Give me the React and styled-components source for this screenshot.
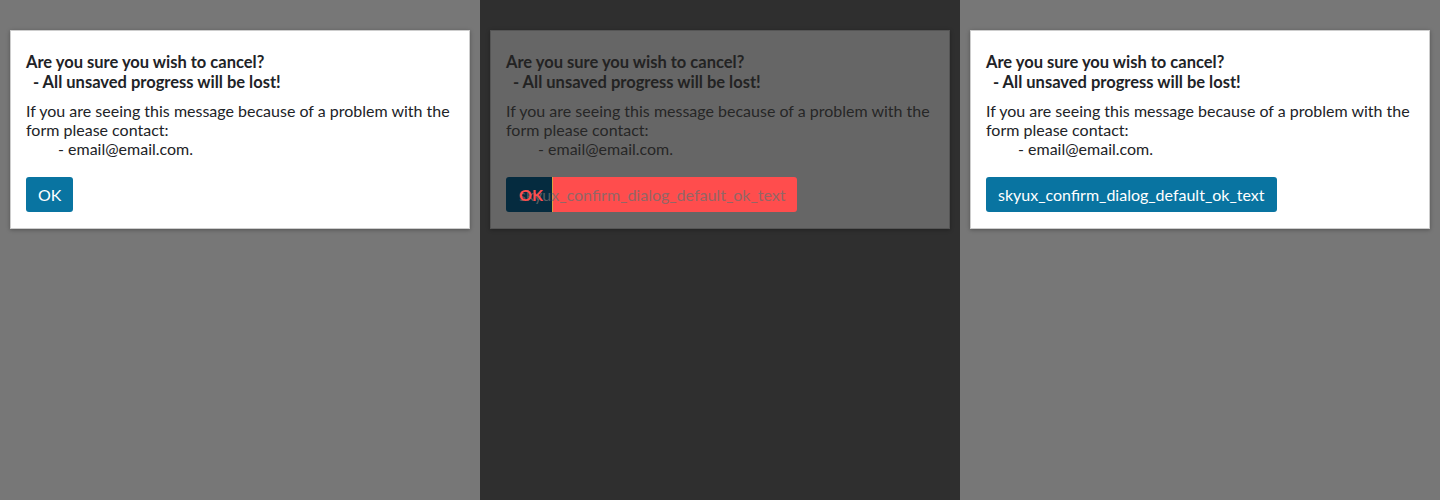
import styled, { createGlobalStyle } from 'styled-components';

const GlobalStyle = createGlobalStyle`
    html, body {
        margin: 0;
        padding: 0;
    }
    body {
        font-family: Lato, "Open Sans", sans-serif;
    }
`;

const HEADING = 'Are you sure you wish to cancel?';
const SUBHEADING = '- All unsaved progress will be lost!';
const LONG_TEXT = 'skyux_confirm_dialog_default_ok_text';

function Dialog({ diff, children }) {
    return (
        <Card $diff={diff}>
            <Heading $diff={diff}>
                {HEADING}
                <br />
                <span className="indent">{SUBHEADING}</span>
            </Heading>
            <Body $diff={diff}>
                If you are seeing this message because of a problem with the form please contact:
                <br />
                <span className="email">- email@email.com.</span>
            </Body>
            <Footer>{children}</Footer>
        </Card>
    );
}

export default function App() {
    return (
        <>
            <GlobalStyle />
            <Page>
                <Panel>
                    <Dialog>
                        <Button>OK</Button>
                    </Dialog>
                </Panel>
                <Panel $diff>
                    <Dialog diff>
                        <DiffButton>
                            <div className="old" />
                            <div className="added" />
                            <span className="label-new">{LONG_TEXT}</span>
                            <span className="label-old">OK</span>
                        </DiffButton>
                    </Dialog>
                </Panel>
                <Panel>
                    <Dialog>
                        <Button>{LONG_TEXT}</Button>
                    </Dialog>
                </Panel>
            </Page>
        </>
    );
}

const Page = styled.div`
    display: grid;
    grid-template-columns: repeat(3, 480px);
    width: 1440px;
    height: 500px;
`;

const Panel = styled.div`
    background-color: ${p => p.$diff ? '#2f2f2f' : '#777777'};
    padding: 30px 10px 0 10px;
    box-sizing: border-box;
`;

const Card = styled.div`
    width: 460px;
    height: 199px;
    box-sizing: border-box;
    padding: 21px 15px 0 15px;
    background-color: ${p => p.$diff ? '#666666' : '#ffffff'};
    border: 1px solid ${p => p.$diff ? '#555555' : '#cdcdcd'};
    box-shadow: 0 1px 4px rgba(0, 0, 0, 0.3);
`;

const Heading = styled.div`
    font-size: 16.5px;
    line-height: 20px;
    font-weight: 700;
    color: ${p => p.$diff ? '#232323' : '#212327'};
    white-space: pre;

    .indent {
        padding-left: 7px;
    }
`;

const Body = styled.div`
    margin-top: 10px;
    font-size: 16px;
    line-height: 18.75px;
    color: ${p => p.$diff ? '#262626' : '#212327'};
    width: 428px;

    .email {
        display: inline-block;
        padding-left: 32px;
    }
`;

const Footer = styled.div`
    display: flex;
    margin-top: 19px;
`;

const Button = styled.button`
    height: 35px;
    padding: 0 12px;
    border: none;
    border-radius: 3px;
    background-color: #0974a1;
    color: #ffffff;
    font-family: Lato, "Open Sans", sans-serif;
    font-size: 16px;
    cursor: pointer;
`;

const DiffButton = styled.div`
    position: relative;
    display: flex;
    height: 35px;
    width: 291px;
    font-size: 16px;

    .old {
        width: 46px;
        background-color: #052b3f;
        border-radius: 3px 0 0 3px;
    }

    .added {
        flex: 1;
        background-color: #ff4d4d;
        border-radius: 0 3px 3px 0;
        border-left: 1px solid #d9a040;
    }

    .label-old,
    .label-new {
        position: absolute;
        top: 0;
        left: 13px;
        line-height: 35px;
        white-space: nowrap;
    }

    .label-old {
        color: #ff4d4d;
        font-weight: 700;
    }

    .label-new {
        color: #6f6f6f;
        opacity: 0.75;
    }
`;
